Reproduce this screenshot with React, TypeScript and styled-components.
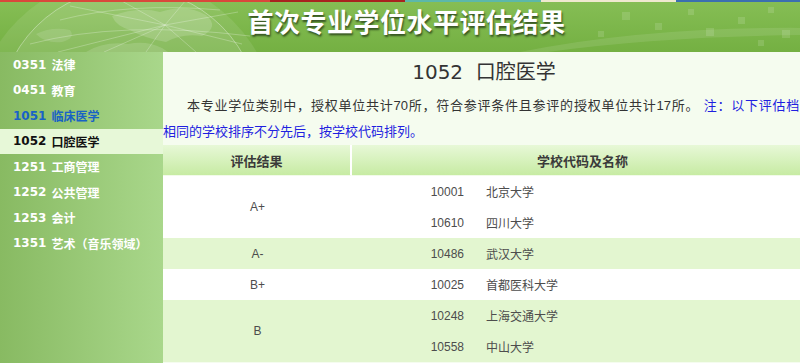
import { Fragment } from "react";
import styled, { createGlobalStyle } from "styled-components";

const GlobalStyle = createGlobalStyle`
  html,
  body {
    margin: 0;
    padding: 0;
    overflow: hidden;
    background: #f5fcef;
  }
`;

type NavState = "normal" | "visited" | "active";

type NavEntry = {
  code: string;
  name: string;
  state: NavState;
};

type School = [string, string];

type GradeGroup = {
  grade: string;
  schools: School[];
};

const navEntries: NavEntry[] = [
  { code: "0351", name: "法律", state: "normal" },
  { code: "0451", name: "教育", state: "normal" },
  { code: "1051", name: "临床医学", state: "visited" },
  { code: "1052", name: "口腔医学", state: "active" },
  { code: "1251", name: "工商管理", state: "normal" },
  { code: "1252", name: "公共管理", state: "normal" },
  { code: "1253", name: "会计", state: "normal" },
  { code: "1351", name: "艺术（音乐领域）", state: "normal" },
];

const groups: GradeGroup[] = [
  {
    grade: "A+",
    schools: [
      ["10001", "北京大学"],
      ["10610", "四川大学"],
    ],
  },
  { grade: "A-", schools: [["10486", "武汉大学"]] },
  { grade: "B+", schools: [["10025", "首都医科大学"]] },
  {
    grade: "B",
    schools: [
      ["10248", "上海交通大学"],
      ["10558", "中山大学"],
    ],
  },
];

const Page = styled.div`
  width: 813px;
  display: flex;
  flex-direction: column;
  font-family: "Liberation Sans", "Noto Sans CJK SC", sans-serif;
`;

const Banner = styled.header`
  position: relative;
  height: 52px;
  overflow: hidden;
  display: flex;
  justify-content: center;
  background: linear-gradient(180deg, #86be55 0%, #74b042 100%);
`;

const Strip = styled.div`
  position: absolute;
  top: 0;
  left: 0;
  right: 0;
  height: 2px;
  background: linear-gradient(
    90deg,
    #d9483b 0 270px,
    #a8231f 270px 405px,
    #5cb8aa 405px 541px,
    #efe9cf 541px 676px,
    #3b6fb0 676px 100%
  );
  z-index: 2;
`;

const BannerArt = styled.svg`
  position: absolute;
  inset: 0;
`;

const BannerTitle = styled.h1`
  position: relative;
  z-index: 1;
  margin: 0;
  padding-top: 5px;
  font-family: "Noto Sans CJK SC", sans-serif;
  font-size: 26px;
  line-height: 32px;
  font-weight: 700;
  color: #ffffff;
  letter-spacing: 0.5px;
  text-shadow: 1px 2px 2px rgba(30, 50, 20, 0.75);
`;

const Body = styled.div`
  display: flex;
  min-height: 320px;
`;

const Sidebar = styled.nav`
  width: 163px;
  flex-shrink: 0;
  display: flex;
  flex-direction: column;
  background: linear-gradient(90deg, #88ba62 0%, #a9d78b 100%);
`;

const NavItem = styled.a<{ $state: NavState }>`
  display: flex;
  align-items: center;
  gap: 5px;
  height: 25.5px;
  padding-left: 13px;
  font-family: "DejaVu Sans", "Noto Sans CJK SC", sans-serif;
  font-size: 12px;
  font-weight: 700;
  text-decoration: none;
  color: ${({ $state }) =>
    $state === "active" ? "#111111" : $state === "visited" ? "#1862c6" : "#ffffff"};
  background: ${({ $state }) => ($state === "active" ? "#e7f8d8" : "transparent")};
`;

const Main = styled.main`
  flex: 1;
  display: flex;
  flex-direction: column;
  background: #f5fcef;
`;

const Heading = styled.h2`
  margin: 0;
  height: 41px;
  line-height: 41px;
  text-align: center;
  font-family: "DejaVu Sans", "Noto Sans CJK SC", sans-serif;
  font-size: 20px;
  font-weight: 400;
  color: #333333;
  padding-right: 8px;
`;

const Intro = styled.p`
  margin: 0;
  font-size: 13px;
  line-height: 26px;
  text-indent: 24px;
  text-align: justify;
  color: #333333;
`;

const Note = styled.span`
  color: #1f1fe0;
`;

const KeepTogether = styled.span`
  white-space: nowrap;
`;

const Table = styled.div`
  display: grid;
  grid-template-columns: 189px 1fr;
  font-size: 12px;
  color: #4d4d4d;
`;

const HeadCell = styled.div<{ $divider?: boolean }>`
  height: 30px;
  display: flex;
  align-items: center;
  justify-content: center;
  font-size: 13px;
  font-weight: 700;
  color: #3a3a3a;
  background: linear-gradient(180deg, #e7f8d7 0%, #c7eba3 100%);
  border-right: ${({ $divider }) => ($divider ? "2px solid #ffffff" : "none")};
  border-bottom: 1px solid #f2fbe9;
`;

const GradeCell = styled.div<{ $shaded: boolean }>`
  display: flex;
  align-items: center;
  justify-content: center;
  background: ${({ $shaded }) => ($shaded ? "#e3f6d0" : "#ffffff")};
`;

const SchoolList = styled.div<{ $shaded: boolean }>`
  display: flex;
  flex-direction: column;
  background: ${({ $shaded }) => ($shaded ? "#e3f6d0" : "#ffffff")};
`;

const SchoolRow = styled.div`
  height: 31px;
  display: grid;
  grid-template-columns: 124px 1fr;
  align-items: center;
`;

const Code = styled.span`
  text-align: right;
  padding-right: 12px;
`;

const Name = styled.span`
  padding-left: 10px;
`;

const squares: [number, number, number][] = [
  [598, 31, 6],
  [622, 12, 8],
  [655, 23, 7],
  [688, 9, 6],
  [706, 28, 8],
  [738, 17, 7],
  [768, 7, 6],
  [782, 30, 8],
  [758, 40, 6],
  [800, 14, 7],
];

function BannerDecoration() {
  return (
    <BannerArt width="813" height="52" viewBox="0 0 813 52">
      <circle cx="125" cy="128" r="152" fill="#ffffff" opacity="0.09" />
      <circle
        cx="129"
        cy="119"
        r="131"
        fill="#ffffff"
        fillOpacity="0.08"
        stroke="#ffffff"
        strokeOpacity="0.35"
      />
      <path
        d="M112 16 Q138 6 160 12 Q186 3 206 15 Q220 27 202 36 Q182 33 166 42 Q144 38 130 30 Q116 26 112 16 Z"
        fill="#ffffff"
        opacity="0.16"
      />
      <path
        d="M86 52 Q104 41 128 44 Q146 40 162 48 L168 52 Z"
        fill="#ffffff"
        opacity="0.14"
      />
      <path
        d="M36 34 Q52 26 70 30 Q76 38 62 42 Q46 44 36 34 Z"
        fill="#ffffff"
        opacity="0.12"
      />
      <g stroke="#ffffff" strokeOpacity="0.32" strokeWidth="0.8" fill="none">
        <path d="M165 25 L58 52" />
        <path d="M165 25 L104 52" />
        <path d="M165 25 L146 52" />
        <path d="M165 25 L196 52" />
        <path d="M165 25 L242 44" />
        <path d="M165 25 L238 12" />
        <path d="M165 25 L120 0" />
        <path d="M165 25 L70 6" />
        <path d="M165 25 L186 0" />
        <path d="M30 44 Q120 20 250 36" />
        <path d="M60 20 Q130 2 220 10" />
      </g>
      <path
        d="M520 52 Q650 26 813 28 L813 35 Q664 36 548 52 Z"
        fill="#ffffff"
        opacity="0.1"
      />
      {squares.map(([x, y, s]) => (
        <rect key={`${x}-${y}`} x={x} y={y} width={s} height={s} fill="#ffffff" opacity="0.13" />
      ))}
    </BannerArt>
  );
}

export default function App() {
  return (
    <Page>
      <GlobalStyle />
      <Banner>
        <Strip />
        <BannerDecoration />
        <BannerTitle>首次专业学位水平评估结果</BannerTitle>
      </Banner>
      <Body>
        <Sidebar>
          {navEntries.map((entry) => (
            <NavItem key={entry.code} href="#" $state={entry.state}>
              <span>{entry.code}</span>
              <span>{entry.name}</span>
            </NavItem>
          ))}
        </Sidebar>
        <Main>
          <Heading>1052{"\u00a0 "}口腔医学</Heading>
          <Intro>
            本专业学位类别中，授权单位共计70所，符合参评条件且参评的授权单位共计17所。{" "}
            <Note>
              注：以下评估档次<KeepTogether>相同的学校排序不分先后，</KeepTogether>按学校代码排列。
            </Note>
          </Intro>
          <Table>
            <HeadCell $divider>评估结果</HeadCell>
            <HeadCell>学校代码及名称</HeadCell>
            {groups.map((group, i) => (
              <Fragment key={group.grade}>
                <GradeCell $shaded={i % 2 === 1}>{group.grade}</GradeCell>
                <SchoolList $shaded={i % 2 === 1}>
                  {group.schools.map(([code, name]) => (
                    <SchoolRow key={code}>
                      <Code>{code}</Code>
                      <Name>{name}</Name>
                    </SchoolRow>
                  ))}
                </SchoolList>
              </Fragment>
            ))}
          </Table>
        </Main>
      </Body>
    </Page>
  );
}
